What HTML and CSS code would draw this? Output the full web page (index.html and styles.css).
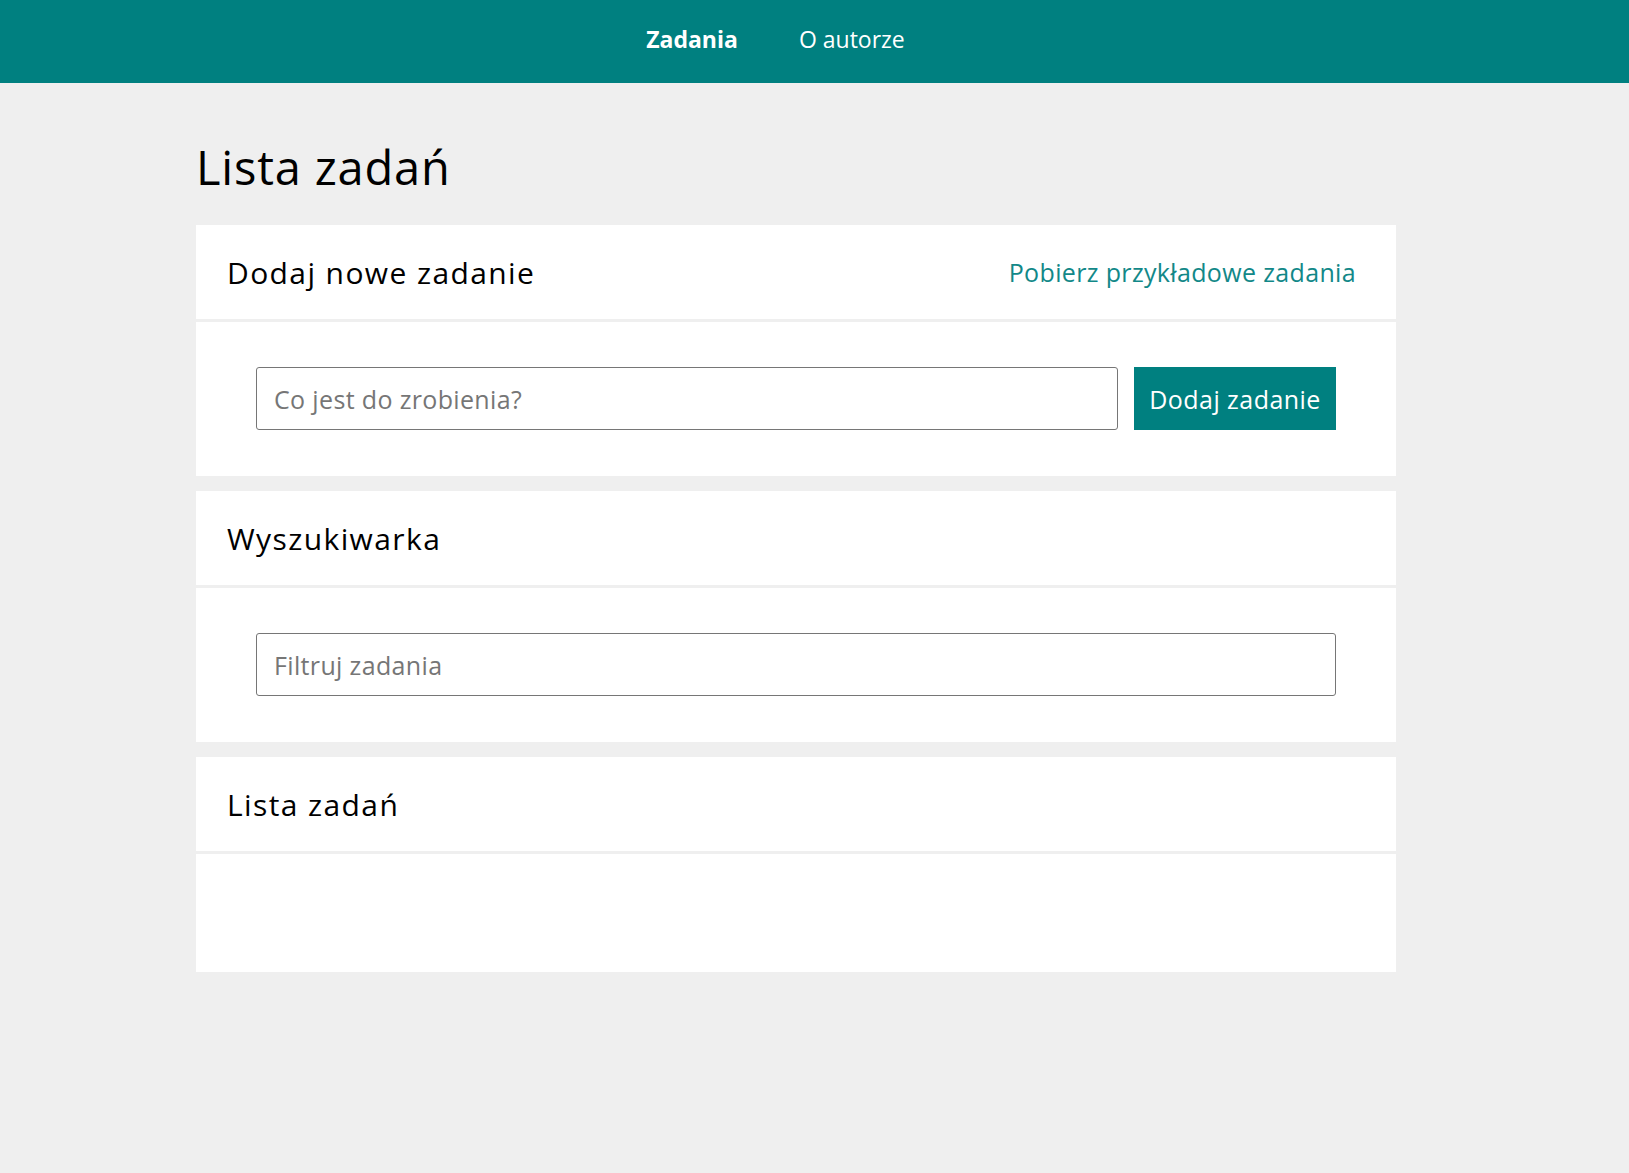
FILE: index.html
```html
<!DOCTYPE html>
<html lang="pl">
<head>
<meta charset="utf-8">
<title>Lista zadań</title>
<link rel="stylesheet" href="styles.css">
</head>
<body>
<nav class="topnav">
  <div class="topnav-inner">
    <a class="nav-link nav-link-active" href="#">Zadania</a>
    <a class="nav-link" href="#">O autorze</a>
  </div>
</nav>
<main class="main">
  <h1 class="page-title">Lista zadań</h1>

  <section class="card">
    <header class="card-header">
      <h2 class="card-title">Dodaj nowe zadanie</h2>
      <a class="card-link" href="#">Pobierz przykładowe zadania</a>
    </header>
    <div class="card-body">
      <form class="add-form">
        <input class="text-input add-input" type="text" placeholder="Co jest do zrobienia?">
        <button class="btn" type="button">Dodaj zadanie</button>
      </form>
    </div>
  </section>

  <section class="card">
    <header class="card-header">
      <h2 class="card-title">Wyszukiwarka</h2>
    </header>
    <div class="card-body">
      <input class="text-input filter-input" type="text" placeholder="Filtruj zadania">
    </div>
  </section>

  <section class="card">
    <header class="card-header">
      <h2 class="card-title">Lista zadań</h2>
    </header>
    <div class="card-body card-body-empty"></div>
  </section>
</main>
</body>
</html>
```

FILE: styles.css
```css
* { box-sizing: border-box; }

html, body {
  margin: 0;
  padding: 0;
}

body {
  background: #efefef;
  font-family: "Open Sans", "Noto Sans", sans-serif;
  color: #000;
  min-height: 1173px;
}

.topnav {
  background: #008080;
  height: 83px;
}

.topnav-inner {
  height: 100%;
  display: flex;
  justify-content: center;
  align-items: center;
  gap: 61px;
  padding-right: 78px;
  padding-bottom: 6px;
}

.nav-link {
  color: #fff;
  text-decoration: none;
  font-size: 23px;
}

.nav-link-active {
  font-weight: 700;
}

.main {
  width: 1200px;
  margin-left: 196px;
}

.page-title {
  font-size: 47px;
  font-weight: 400;
  letter-spacing: 0.8px;
  line-height: 54px;
  margin: 57px 0 31px;
}

.card {
  background: #fff;
  margin-bottom: 15px;
}

.card-header {
  height: 97px;
  border-bottom: 3px solid #efefef;
  display: flex;
  align-items: center;
  justify-content: space-between;
  padding: 0 40px 0 31px;
}

.card-title {
  font-size: 30px;
  font-weight: 500;
  letter-spacing: 1.4px;
  margin: 0;
}

.card-link {
  font-size: 25px;
  letter-spacing: 0.35px;
  color: #128888;
  text-decoration: none;
}

.card-body {
  padding: 45px 60px 46px 60px;
}

.card-body-empty {
  height: 118px;
}

.add-form {
  display: flex;
  gap: 16px;
}

.text-input {
  height: 63px;
  border: 1px solid #767676;
  border-radius: 3px;
  padding: 0 17px;
  font-family: inherit;
  font-size: 25px;
  letter-spacing: 0.35px;
  color: #222;
  background: #fff;
}

.text-input::placeholder {
  color: #767676;
}

.add-input {
  flex: 1;
}

.filter-input {
  width: 100%;
  display: block;
}

.btn {
  width: 202px;
  height: 63px;
  border: none;
  background: #008080;
  color: #fff;
  font-family: inherit;
  font-size: 25px;
  letter-spacing: 0.45px;
  padding: 0;
}
```
